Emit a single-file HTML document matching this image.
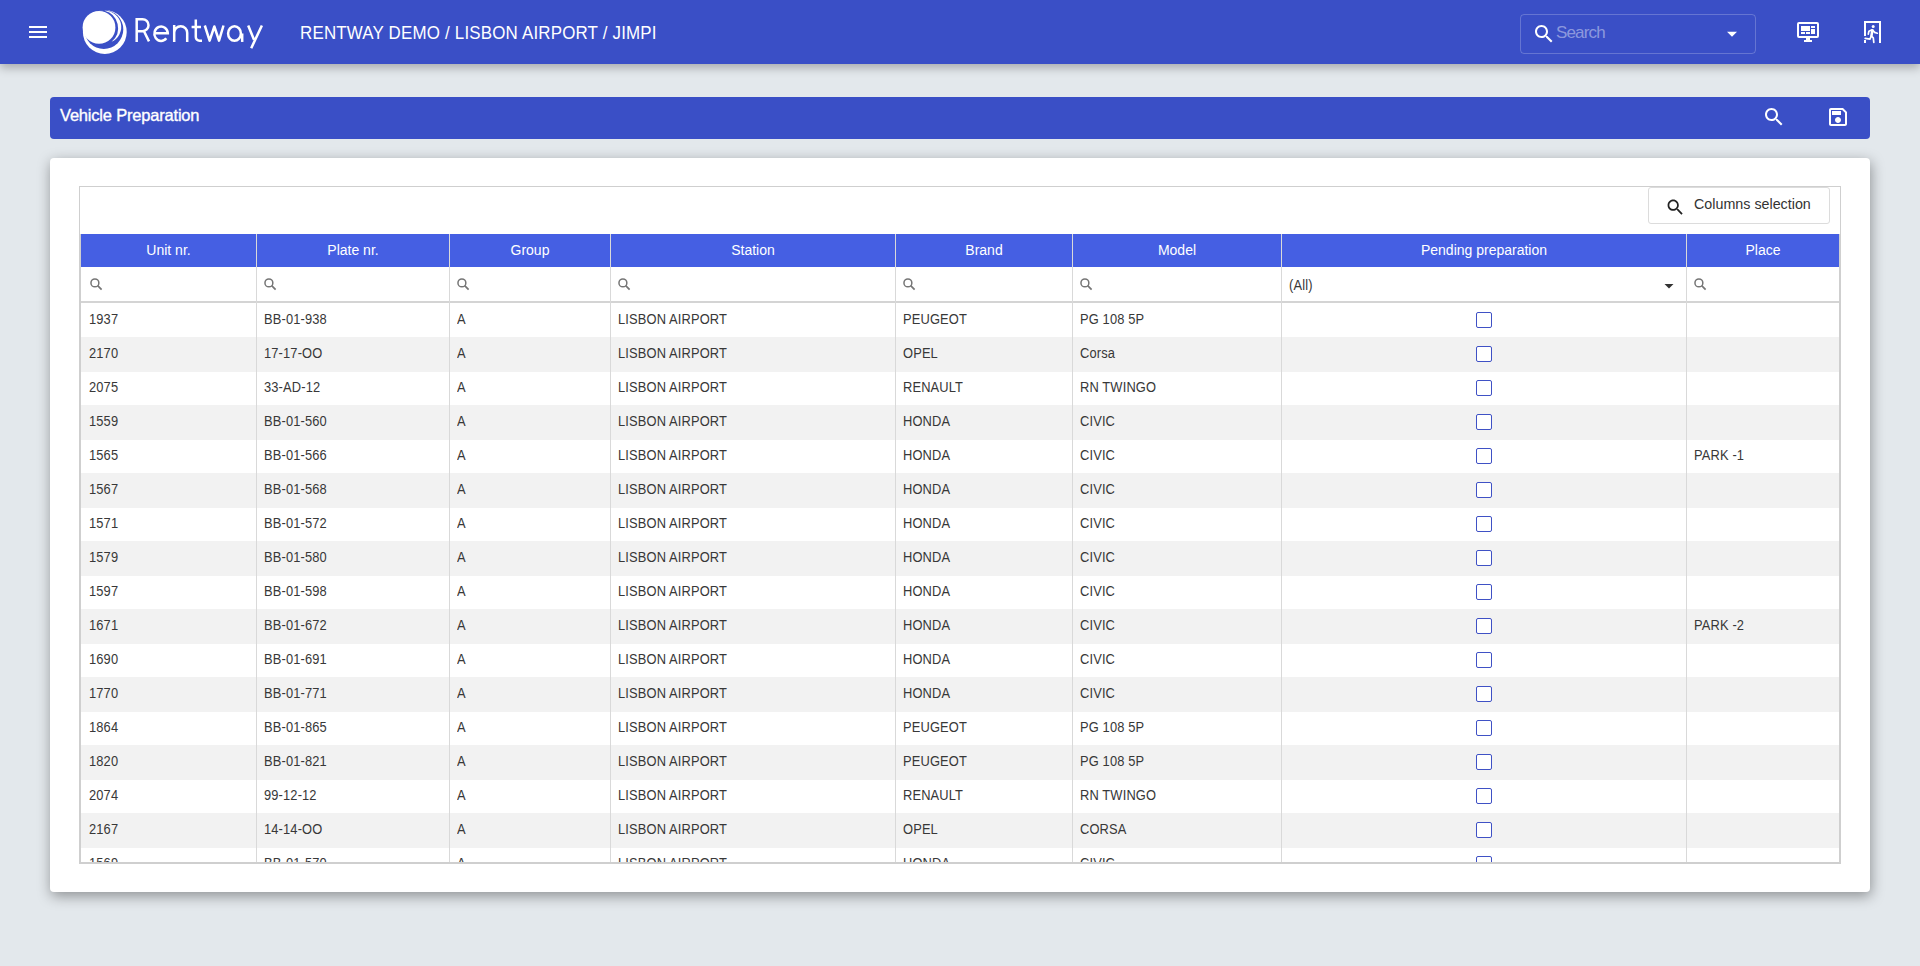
<!DOCTYPE html>
<html><head><meta charset="utf-8"><title>Vehicle Preparation</title>
<style>
*{box-sizing:border-box}
html,body{margin:0;padding:0}
body{width:1920px;height:966px;overflow:hidden;background:#e3e8ec;font-family:"Liberation Sans",sans-serif;position:relative;color:#333333}
.abs{position:absolute}
#hdr{left:0;top:0;width:1920px;height:64px;background:#3a4fc6;box-shadow:0 4px 9px rgba(0,0,0,.26);z-index:2}
#crumb{left:300px;top:23px;font-size:18.5px;line-height:20px;color:#fff;letter-spacing:0.2px;white-space:nowrap;transform-origin:0 0;transform:scaleX(0.915)}
#sbox{left:1520px;top:14px;width:236px;height:40px;border:1px solid rgba(255,255,255,.22);border-radius:4px}
#sph{left:1556px;top:24px;font-size:17px;line-height:18px;color:rgba(255,255,255,.43);letter-spacing:-0.85px}
#title{left:50px;top:97px;width:1820px;height:42px;background:#3a4fc6;border-radius:4px}
#ttext{left:60px;top:107px;font-size:16.5px;line-height:16px;color:#fff;letter-spacing:-0.2px;-webkit-text-stroke:0.35px #fff;white-space:nowrap}
#card{left:50px;top:158px;width:1820px;height:734px;background:#fff;border-radius:4px;box-shadow:1px 4px 14px rgba(0,0,0,.38)}
#grid{left:79px;top:186px;width:1762px;height:678px;border:1px solid #cfcfcf;background:#fff}
#colsel{left:1648px;top:187px;width:182px;height:37px;border:1px solid #dcdcdc;border-radius:3px;background:#fff}
#colsel span{position:absolute;left:45px;top:9px;font-size:14.3px;line-height:14px;color:#333;white-space:nowrap}
.th{position:absolute;top:234px;height:33px;background:#455fe3;color:#fff;font-size:14px;line-height:32px;text-align:center;white-space:nowrap}
.row{position:absolute;left:81px;width:1758px;height:34px}
.row.alt{background:#f2f2f2}
.cell{position:absolute;font-size:14px;line-height:33px;color:#383838;white-space:nowrap;letter-spacing:0.15px;transform-origin:0 0;transform:scaleX(0.92)}
.vl{position:absolute;width:1px;background:#d9d9d9}
.cb{position:absolute;width:16px;height:16px;border:1px solid #3f51c5;border-radius:2px;background:#fff}
</style></head><body>

<div id="hdr" class="abs">
<svg class="abs" style="left:26px;top:20px" width="24" height="24" viewBox="0 0 24 24"><path fill="#fff" d="M3 18h18v-2H3v2zm0-5h18v-2H3v2zm0-7v2h18V6H3z"/></svg>
<svg class="abs" style="left:78px;top:4px" width="190" height="56" viewBox="78 4 190 56">
<circle cx="104.8" cy="32.0" r="21.9" fill="#fff"/>
<circle cx="103.8" cy="29.4" r="19.5" fill="#3a4fc6"/>
<path fill="#fff" d="M104.5 10.8A16.2 16.2 0 0 1 111.6 41.8A17.8 17.8 0 0 0 104.5 10.8Z"/>
<circle cx="99.0" cy="27.4" r="16.4" fill="#fff"/>
<g fill="none" stroke="#fff" stroke-width="2.5" stroke-linecap="butt" stroke-linejoin="miter">
<path d="M136.7 41.95V19.2H142.5A6 6 0 0 1 142.5 31.2H136.7M144 31.2L149 41.4"/>
<path d="M154.4 33.3H167.8A6.7 7.25 0 1 0 166.3 38.3"/>
<path d="M174.2 25V41.95M174.2 32.8A6.5 6.5 0 0 1 187.2 32.8V41.95"/>
<path d="M195.8 19.6V37A3.7 3.7 0 0 0 199.5 40.7H202M191.6 27.05H201"/>
</g>
<g fill="none" stroke="#fff" stroke-width="2.5" stroke-linecap="butt" stroke-linejoin="round">
<path d="M204.8 25.5L209.6 40.6L214.35 26.5L219 40.6L223.5 25.5"/>
<ellipse cx="234.5" cy="33.5" rx="6.4" ry="7.3"/>
<path d="M242.2 33.5V41.95"/>
<path d="M248.2 25.5L254 39.7M261.9 25.5L251.2 48.2"/>
</g></svg>
<div id="crumb" class="abs">RENTWAY DEMO / LISBON AIRPORT / JIMPI</div>
<div id="sbox" class="abs"></div>
<svg class="abs" style="left:1532px;top:22px" width="24" height="24" viewBox="0 0 24 24"><path fill="#fff" d="M15.5 14h-.79l-.28-.27C15.41 12.59 16 11.11 16 9.5 16 5.91 13.09 3 9.5 3S3 5.91 3 9.5 5.91 16 9.5 16c1.610 0 3.09-.59 4.23-1.57l.27.28v.79l5 4.99L20.49 19l-4.99-5zm-6 0C7.01 14 5 11.99 5 9.5S7.01 5 9.5 5 14 7.01 14 9.5 11.99 14 9.5 14z"/></svg>
<div id="sph" class="abs">Search</div>
<svg class="abs" style="left:1722px;top:22px" width="20" height="24" viewBox="0 0 20 24"><path fill="#fff" d="M5 9.7h10l-5 5z"/></svg>
<svg class="abs" style="left:1792px;top:16px" width="32" height="32" viewBox="0 0 32 32"><g fill="#fff">
<path fill-rule="evenodd" d="M7 6h18a2 2 0 0 1 2 2v12a2 2 0 0 1-2 2H7a2 2 0 0 1-2-2V8a2 2 0 0 1 2-2zM7 8v12h18V8z"/>
<rect x="14" y="22" width="4" height="2"/><rect x="12" y="24" width="8" height="2"/>
<rect x="9" y="10" width="9" height="5"/><rect x="19" y="10" width="4" height="2"/><rect x="19" y="13" width="4" height="5"/>
<rect x="9" y="16" width="4" height="2"/><rect x="14" y="16" width="4" height="2"/></g></svg>
<svg class="abs" style="left:1856px;top:16px" width="32" height="32" viewBox="0 0 32 32"><g fill="#fff">
<rect x="8" y="5" width="17" height="2"/><rect x="8" y="5" width="2" height="15"/><rect x="8" y="24" width="2" height="3"/><rect x="23" y="5" width="2" height="22"/>
<circle cx="17.2" cy="10.4" r="1.5"/></g>
<g fill="none" stroke="#fff" stroke-width="1.7" stroke-linecap="round" stroke-linejoin="round">
<path d="M16.4 14.2L15.4 20" stroke-width="2.5"/><path d="M15.6 20.2L17.3 21.8L17.8 26.3"/><path d="M15.2 20.3L13.9 23.2L9.2 22.3"/><path d="M15.6 13.9L12.9 15.2L12.3 18.2"/><path d="M16.8 14.2L18.6 16.4L21.3 17.2"/>
</g></svg>
</div>
<div id="title" class="abs"></div>
<div id="ttext" class="abs">Vehicle Preparation</div>
<svg class="abs" style="left:1761.5px;top:105px" width="24" height="24" viewBox="0 0 24 24"><path fill="#fff" d="M15.5 14h-.79l-.28-.27C15.41 12.590 16 11.11 16 9.5 16 5.91 13.09 3 9.5 3S3 5.91 3 9.5 5.91 16 9.5 16c1.61 0 3.09-.59 4.23-1.57l.27.28v.79l5 4.99L20.49 19l-4.99-5zm-6 0C7.01 14 5 11.99 5 9.5S7.01 5 9.5 5 14 7.01 14 9.5 11.99 14 9.5 14z"/></svg>
<svg class="abs" style="left:1826px;top:104.8px" width="24" height="24" viewBox="0 0 24 24"><path fill="#fff" d="M17 3H5c-1.11 0-2 .9-2 2v14c0 1.1.89 2 2 2h14c1.1 0 2-.9 2-2V7l-4-4zm2 16H5V5h11.17L19 7.83V19zm-7-7c-1.66 0-3 1.34-3 3s1.34 3 3 3 3-1.34 3-3-1.34-3-3-3zM6 6h9v4H6z"/></svg>
<div id="card" class="abs"></div>
<div id="grid" class="abs"></div>
<div id="colsel" class="abs"><svg style="position:absolute;left:16px;top:8.8px" width="20.7" height="20.7" viewBox="0 0 24 24"><path fill="#222" d="M15.5 14h-.79l-.28-.27C15.410 12.59 16 11.11 16 9.5 16 5.91 13.09 3 9.5 3S3 5.91 3 9.5 5.91 16 9.5 16c1.61 0 3.09-.59 4.23-1.57l.27.28v.79l5 4.99L20.49 19l-4.99-5zm-6 0C7.01 14 5 11.99 5 9.5S7.01 5 9.5 5 14 7.01 14 9.5 11.99 14 9.5 14z"/></svg><span>Columns selection</span></div>
<div class="th" style="left:81px;width:175px">Unit nr.</div>
<div class="th" style="left:257px;width:192px">Plate nr.</div>
<div class="th" style="left:450px;width:160px">Group</div>
<div class="th" style="left:611px;width:284px">Station</div>
<div class="th" style="left:896px;width:176px">Brand</div>
<div class="th" style="left:1073px;width:208px">Model</div>
<div class="th" style="left:1282px;width:404px">Pending preparation</div>
<div class="th" style="left:1687px;width:152px">Place</div>
<div class="abs" style="left:80px;top:301px;width:1759px;height:2px;background:#d4d4d4"></div>
<div class="abs" style="left:90px;top:278px"><svg style="display:block" width="14" height="14" viewBox="0 0 14 14"><circle cx="4.9" cy="4.9" r="3.95" fill="none" stroke="#757575" stroke-width="1.5"/><path d="M7.7 7.7L11.6 11.6" stroke="#757575" stroke-width="1.7"/></svg></div>
<div class="abs" style="left:264px;top:278px"><svg style="display:block" width="14" height="14" viewBox="0 0 14 14"><circle cx="4.9" cy="4.9" r="3.95" fill="none" stroke="#757575" stroke-width="1.5"/><path d="M7.7 7.7L11.6 11.6" stroke="#757575" stroke-width="1.7"/></svg></div>
<div class="abs" style="left:457px;top:278px"><svg style="display:block" width="14" height="14" viewBox="0 0 14 14"><circle cx="4.9" cy="4.9" r="3.95" fill="none" stroke="#757575" stroke-width="1.5"/><path d="M7.7 7.7L11.6 11.6" stroke="#757575" stroke-width="1.7"/></svg></div>
<div class="abs" style="left:618px;top:278px"><svg style="display:block" width="14" height="14" viewBox="0 0 14 14"><circle cx="4.9" cy="4.9" r="3.95" fill="none" stroke="#757575" stroke-width="1.5"/><path d="M7.7 7.7L11.6 11.6" stroke="#757575" stroke-width="1.7"/></svg></div>
<div class="abs" style="left:903px;top:278px"><svg style="display:block" width="14" height="14" viewBox="0 0 14 14"><circle cx="4.9" cy="4.9" r="3.95" fill="none" stroke="#757575" stroke-width="1.5"/><path d="M7.7 7.7L11.6 11.6" stroke="#757575" stroke-width="1.7"/></svg></div>
<div class="abs" style="left:1080px;top:278px"><svg style="display:block" width="14" height="14" viewBox="0 0 14 14"><circle cx="4.9" cy="4.9" r="3.95" fill="none" stroke="#757575" stroke-width="1.5"/><path d="M7.7 7.7L11.6 11.6" stroke="#757575" stroke-width="1.7"/></svg></div>
<div class="cell" style="left:1289px;top:268.5px;font-size:14px">(All)</div>
<svg class="abs" style="left:1664px;top:282.5px" width="10" height="6" viewBox="0 0 10 6"><path fill="#333" d="M0.5 1h9l-4.5 4.5z"/></svg>
<div class="abs" style="left:1694px;top:278px"><svg style="display:block" width="14" height="14" viewBox="0 0 14 14"><circle cx="4.9" cy="4.9" r="3.95" fill="none" stroke="#757575" stroke-width="1.5"/><path d="M7.7 7.7L11.6 11.6" stroke="#757575" stroke-width="1.7"/></svg></div>
<div class="row" style="top:303px;height:34px;overflow:hidden">
<div class="cell" style="left:8px;top:0">1937</div>
<div class="cell" style="left:183px;top:0">BB-01-938</div>
<div class="cell" style="left:376px;top:0">A</div>
<div class="cell" style="left:537px;top:0">LISBON AIRPORT</div>
<div class="cell" style="left:822px;top:0">PEUGEOT</div>
<div class="cell" style="left:999px;top:0">PG 108 5P</div>
<div class="cb" style="left:1395px;top:9px"></div>
</div>
<div class="row alt" style="top:337px;height:35px;overflow:hidden">
<div class="cell" style="left:8px;top:0">2170</div>
<div class="cell" style="left:183px;top:0">17-17-OO</div>
<div class="cell" style="left:376px;top:0">A</div>
<div class="cell" style="left:537px;top:0">LISBON AIRPORT</div>
<div class="cell" style="left:822px;top:0">OPEL</div>
<div class="cell" style="left:999px;top:0">Corsa</div>
<div class="cb" style="left:1395px;top:9px"></div>
</div>
<div class="row" style="top:371px;height:34px;overflow:hidden">
<div class="cell" style="left:8px;top:0">2075</div>
<div class="cell" style="left:183px;top:0">33-AD-12</div>
<div class="cell" style="left:376px;top:0">A</div>
<div class="cell" style="left:537px;top:0">LISBON AIRPORT</div>
<div class="cell" style="left:822px;top:0">RENAULT</div>
<div class="cell" style="left:999px;top:0">RN TWINGO</div>
<div class="cb" style="left:1395px;top:9px"></div>
</div>
<div class="row alt" style="top:405px;height:35px;overflow:hidden">
<div class="cell" style="left:8px;top:0">1559</div>
<div class="cell" style="left:183px;top:0">BB-01-560</div>
<div class="cell" style="left:376px;top:0">A</div>
<div class="cell" style="left:537px;top:0">LISBON AIRPORT</div>
<div class="cell" style="left:822px;top:0">HONDA</div>
<div class="cell" style="left:999px;top:0">CIVIC</div>
<div class="cb" style="left:1395px;top:9px"></div>
</div>
<div class="row" style="top:439px;height:34px;overflow:hidden">
<div class="cell" style="left:8px;top:0">1565</div>
<div class="cell" style="left:183px;top:0">BB-01-566</div>
<div class="cell" style="left:376px;top:0">A</div>
<div class="cell" style="left:537px;top:0">LISBON AIRPORT</div>
<div class="cell" style="left:822px;top:0">HONDA</div>
<div class="cell" style="left:999px;top:0">CIVIC</div>
<div class="cb" style="left:1395px;top:9px"></div>
<div class="cell" style="left:1613px;top:0">PARK -1</div>
</div>
<div class="row alt" style="top:473px;height:35px;overflow:hidden">
<div class="cell" style="left:8px;top:0">1567</div>
<div class="cell" style="left:183px;top:0">BB-01-568</div>
<div class="cell" style="left:376px;top:0">A</div>
<div class="cell" style="left:537px;top:0">LISBON AIRPORT</div>
<div class="cell" style="left:822px;top:0">HONDA</div>
<div class="cell" style="left:999px;top:0">CIVIC</div>
<div class="cb" style="left:1395px;top:9px"></div>
</div>
<div class="row" style="top:507px;height:34px;overflow:hidden">
<div class="cell" style="left:8px;top:0">1571</div>
<div class="cell" style="left:183px;top:0">BB-01-572</div>
<div class="cell" style="left:376px;top:0">A</div>
<div class="cell" style="left:537px;top:0">LISBON AIRPORT</div>
<div class="cell" style="left:822px;top:0">HONDA</div>
<div class="cell" style="left:999px;top:0">CIVIC</div>
<div class="cb" style="left:1395px;top:9px"></div>
</div>
<div class="row alt" style="top:541px;height:35px;overflow:hidden">
<div class="cell" style="left:8px;top:0">1579</div>
<div class="cell" style="left:183px;top:0">BB-01-580</div>
<div class="cell" style="left:376px;top:0">A</div>
<div class="cell" style="left:537px;top:0">LISBON AIRPORT</div>
<div class="cell" style="left:822px;top:0">HONDA</div>
<div class="cell" style="left:999px;top:0">CIVIC</div>
<div class="cb" style="left:1395px;top:9px"></div>
</div>
<div class="row" style="top:575px;height:34px;overflow:hidden">
<div class="cell" style="left:8px;top:0">1597</div>
<div class="cell" style="left:183px;top:0">BB-01-598</div>
<div class="cell" style="left:376px;top:0">A</div>
<div class="cell" style="left:537px;top:0">LISBON AIRPORT</div>
<div class="cell" style="left:822px;top:0">HONDA</div>
<div class="cell" style="left:999px;top:0">CIVIC</div>
<div class="cb" style="left:1395px;top:9px"></div>
</div>
<div class="row alt" style="top:609px;height:35px;overflow:hidden">
<div class="cell" style="left:8px;top:0">1671</div>
<div class="cell" style="left:183px;top:0">BB-01-672</div>
<div class="cell" style="left:376px;top:0">A</div>
<div class="cell" style="left:537px;top:0">LISBON AIRPORT</div>
<div class="cell" style="left:822px;top:0">HONDA</div>
<div class="cell" style="left:999px;top:0">CIVIC</div>
<div class="cb" style="left:1395px;top:9px"></div>
<div class="cell" style="left:1613px;top:0">PARK -2</div>
</div>
<div class="row" style="top:643px;height:34px;overflow:hidden">
<div class="cell" style="left:8px;top:0">1690</div>
<div class="cell" style="left:183px;top:0">BB-01-691</div>
<div class="cell" style="left:376px;top:0">A</div>
<div class="cell" style="left:537px;top:0">LISBON AIRPORT</div>
<div class="cell" style="left:822px;top:0">HONDA</div>
<div class="cell" style="left:999px;top:0">CIVIC</div>
<div class="cb" style="left:1395px;top:9px"></div>
</div>
<div class="row alt" style="top:677px;height:35px;overflow:hidden">
<div class="cell" style="left:8px;top:0">1770</div>
<div class="cell" style="left:183px;top:0">BB-01-771</div>
<div class="cell" style="left:376px;top:0">A</div>
<div class="cell" style="left:537px;top:0">LISBON AIRPORT</div>
<div class="cell" style="left:822px;top:0">HONDA</div>
<div class="cell" style="left:999px;top:0">CIVIC</div>
<div class="cb" style="left:1395px;top:9px"></div>
</div>
<div class="row" style="top:711px;height:34px;overflow:hidden">
<div class="cell" style="left:8px;top:0">1864</div>
<div class="cell" style="left:183px;top:0">BB-01-865</div>
<div class="cell" style="left:376px;top:0">A</div>
<div class="cell" style="left:537px;top:0">LISBON AIRPORT</div>
<div class="cell" style="left:822px;top:0">PEUGEOT</div>
<div class="cell" style="left:999px;top:0">PG 108 5P</div>
<div class="cb" style="left:1395px;top:9px"></div>
</div>
<div class="row alt" style="top:745px;height:35px;overflow:hidden">
<div class="cell" style="left:8px;top:0">1820</div>
<div class="cell" style="left:183px;top:0">BB-01-821</div>
<div class="cell" style="left:376px;top:0">A</div>
<div class="cell" style="left:537px;top:0">LISBON AIRPORT</div>
<div class="cell" style="left:822px;top:0">PEUGEOT</div>
<div class="cell" style="left:999px;top:0">PG 108 5P</div>
<div class="cb" style="left:1395px;top:9px"></div>
</div>
<div class="row" style="top:779px;height:34px;overflow:hidden">
<div class="cell" style="left:8px;top:0">2074</div>
<div class="cell" style="left:183px;top:0">99-12-12</div>
<div class="cell" style="left:376px;top:0">A</div>
<div class="cell" style="left:537px;top:0">LISBON AIRPORT</div>
<div class="cell" style="left:822px;top:0">RENAULT</div>
<div class="cell" style="left:999px;top:0">RN TWINGO</div>
<div class="cb" style="left:1395px;top:9px"></div>
</div>
<div class="row alt" style="top:813px;height:35px;overflow:hidden">
<div class="cell" style="left:8px;top:0">2167</div>
<div class="cell" style="left:183px;top:0">14-14-OO</div>
<div class="cell" style="left:376px;top:0">A</div>
<div class="cell" style="left:537px;top:0">LISBON AIRPORT</div>
<div class="cell" style="left:822px;top:0">OPEL</div>
<div class="cell" style="left:999px;top:0">CORSA</div>
<div class="cb" style="left:1395px;top:9px"></div>
</div>
<div class="row" style="top:847px;height:15px;overflow:hidden">
<div class="cell" style="left:8px;top:0">1569</div>
<div class="cell" style="left:183px;top:0">BB-01-570</div>
<div class="cell" style="left:376px;top:0">A</div>
<div class="cell" style="left:537px;top:0">LISBON AIRPORT</div>
<div class="cell" style="left:822px;top:0">HONDA</div>
<div class="cell" style="left:999px;top:0">CIVIC</div>
<div class="cb" style="left:1395px;top:9px"></div>
</div>
<div class="vl" style="left:256px;top:234px;height:628px"></div>
<div class="vl" style="left:449px;top:234px;height:628px"></div>
<div class="vl" style="left:610px;top:234px;height:628px"></div>
<div class="vl" style="left:895px;top:234px;height:628px"></div>
<div class="vl" style="left:1072px;top:234px;height:628px"></div>
<div class="vl" style="left:1281px;top:234px;height:628px"></div>
<div class="vl" style="left:1686px;top:234px;height:628px"></div>
<div class="abs" style="left:80px;top:234px;width:1px;height:629px;background:#cfcfcf"></div>
<div class="abs" style="left:1839px;top:234px;width:1px;height:629px;background:#cfcfcf"></div>
<div class="abs" style="left:80px;top:862px;width:1760px;height:1px;background:#cfcfcf"></div>
</body></html>
